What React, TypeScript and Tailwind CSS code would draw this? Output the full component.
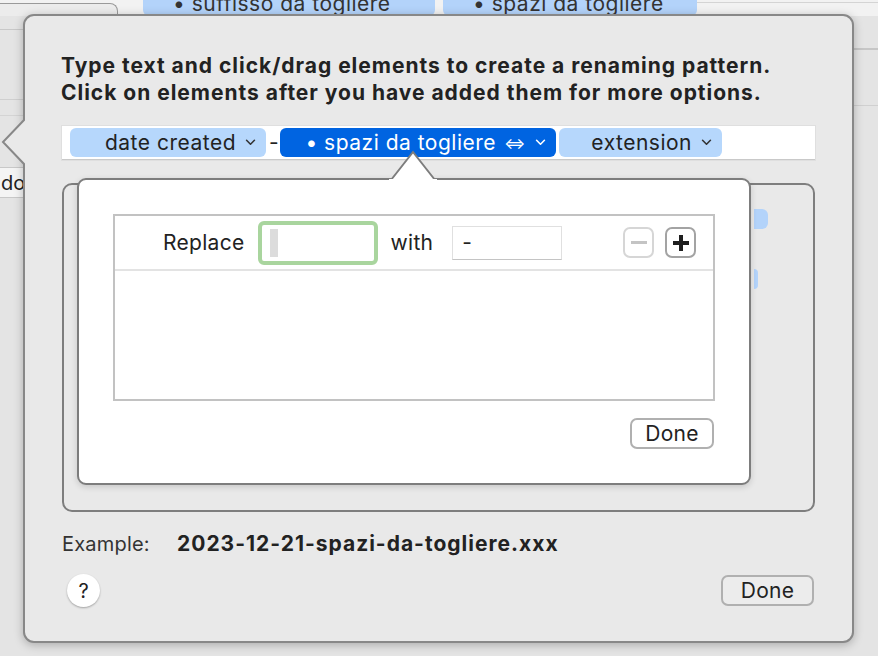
import React from 'react';

const font = { fontFamily: 'Inter, "Noto Sans", sans-serif' };

function Chevron({ className = '' }: { className?: string }) {
  return (
    <svg viewBox="0 0 12 8" className={`w-[11px] h-[7px] ${className}`} fill="none">
      <path d="M1.5 1.5 L6 6 L10.5 1.5" stroke="currentColor" strokeWidth="1.8" strokeLinecap="round" strokeLinejoin="round" />
    </svg>
  );
}

function Token({ label, selected = false, width }: { label: React.ReactNode; selected?: boolean; width: string }) {
  return (
    <div
      className={`${width} h-[29px] rounded-[6px] flex items-center justify-end pr-[10px] gap-[9px] text-[21px] tracking-[0.5px] ${
        selected ? 'bg-[#0064e1] text-white' : 'bg-[#b6d7fc] text-[#222]'
      }`}
    >
      {label}
      <Chevron className={selected ? 'text-white' : 'text-[#333]'} />
    </div>
  );
}

// the app window peeking out around the sheet
function BackgroundWindow() {
  return (
    <div className="w-full h-full bg-[#e4e4e4] flex flex-col">
      <div className="h-[16px] flex items-end bg-[#f2f2f2]">
        <div className="w-[118px] h-[13px] border-t border-r border-[#9a9a9a] rounded-tr-[8px] bg-[#ececec]" />
        <div className="ml-[25px] w-[292px] h-[16px] rounded-b-[6px] bg-[#b3d3fa] text-[21px] leading-[16px] tracking-[0.5px] text-[#333] pl-[30px] overflow-hidden">
          <span className="relative top-[-4px]">• suffisso da togliere</span>
        </div>
        <div className="ml-[8px] w-[254px] h-[16px] rounded-b-[6px] bg-[#b3d3fa] text-[21px] leading-[16px] tracking-[0.5px] text-[#333] pl-[30px] overflow-hidden">
          <span className="relative top-[-4px]">• spazi da togliere</span>
        </div>
        <div className="flex-1 h-[14px] border-t border-[#d4d4d4]" />
      </div>
      <div className="flex flex-1">
        <div className="w-[24px] flex flex-col">
          <div className="h-[14px] border-b border-[#c8c8c8]" />
          <div className="h-[70px] border-b border-[#cfcfcf]" />
          <div className="h-[16px] border-b border-[#d4d4d4]" />
          <div className="h-[52px] border-b border-[#c8c8c8]" />
          <div className="h-[30px] border-b border-[#c8c8c8] bg-[#f4f4f4] text-[20px] leading-[30px] text-[#222] pl-[1px] overflow-hidden">do</div>
          <div className="flex-1" />
        </div>
        <div className="flex-1" />
        <div className="w-[25px] flex flex-col">
          <div className="h-[34px] border-b-2 border-[#c6c6c6]" />
          <div className="h-[56px] border-b border-[#d0d0d0]" />
          <div className="flex-1" />
        </div>
      </div>
    </div>
  );
}

function ReplacePopover() {
  return (
    <div className="absolute left-[52px] top-[162px] w-[674px] h-[307px] bg-white border-2 border-[#7d7d7d] rounded-[9px] shadow-[0_2px_6px_rgba(0,0,0,0.15)] px-[34px] pt-[34px]">
      {/* arrow pointing at the selected token */}
      <svg className="absolute left-[310px] top-[-30px]" width="48" height="31" viewBox="0 0 48 31">
        <path d="M2 30 L24 2 L46 30 Z" fill="white" />
        <path d="M2 30 L24 2 L46 30" fill="none" stroke="#7d7d7d" strokeWidth="2" strokeLinejoin="miter" />
        <rect x="0" y="29" width="48" height="2" fill="white" />
      </svg>
      <div className="h-[187px] border-2 border-[#c2c2c2] flex flex-col">
        <div className="h-[55px] border-b-2 border-[#e3e3e3] flex items-center text-[21px] tracking-[0.3px] text-[#222]">
          <span className="ml-[48px]">Replace</span>
          <div className="ml-[13px] w-[120px] h-[44px] rounded-[6px] border-[4px] border-[#a9d59e] bg-white flex items-center pl-[8px]">
            <div className="w-[8px] h-[28px] bg-[#dcdcdc]" />
          </div>
          <span className="ml-[13px]">with</span>
          <div className="ml-[19px] w-[110px] h-[34px] border border-[#e0e0e0] border-b-[#c4c4c4] flex items-center pl-[9px]">-</div>
          <div className="ml-auto flex gap-[11px] mr-[17px]">
            <div className="w-[31px] h-[31px] rounded-[7px] border-2 border-[#d6d6d6] flex items-center justify-center">
              <div className="w-[16px] h-[3px] bg-[#c4c4c4]" />
            </div>
            <div className="w-[31px] h-[31px] rounded-[7px] border-2 border-[#a3a3a3] flex items-center justify-center relative">
              <div className="w-[16px] h-[4px] bg-[#1e1e1e]" />
              <div className="absolute w-[4px] h-[16px] bg-[#1e1e1e]" />
            </div>
          </div>
        </div>
        <div className="flex-1" />
      </div>
      <div className="flex justify-end mt-[17px] mr-[1px]">
        <button className="w-[84px] h-[31px] rounded-[7px] border-2 border-[#b0b0b0] bg-white text-[21px] tracking-[0.3px] leading-none text-[#222]">Done</button>
      </div>
    </div>
  );
}

export default function App() {
  return (
    <div className="relative w-[878px] h-[656px] overflow-hidden" style={font}>
      <BackgroundWindow />

      {/* Renaming sheet */}
      <div className="absolute left-[23px] top-[14px] w-[831px] h-[629px] bg-[#e9e9e9] border-2 border-[#888] rounded-[11px] shadow-[0_2px_10px_rgba(0,0,0,0.25)] px-[37px] pt-[36px]">
        {/* arrow on the left edge */}
        <svg className="absolute left-[-25px] top-[102px]" width="27" height="48" viewBox="0 0 27 48">
          <path d="M25 1 L3 24 L25 47 Z" fill="#e9e9e9" />
          <path d="M25 1 L3 24 L25 47" fill="none" stroke="#888" strokeWidth="2" />
          <rect x="25" y="0" width="2" height="48" fill="#e9e9e9" />
        </svg>

        <p className="text-[21px] leading-[27px] font-bold tracking-[0.98px] text-[#222] -ml-[1px]">
          Type text and click/drag elements to create a renaming pattern.
          <br />
          Click on elements after you have added them for more options.
        </p>

        <div className="mt-[20px] h-[34px] bg-white border-b border-[#c9c9c9] shadow-[0_0_0_1px_rgba(0,0,0,0.04)] flex items-center pl-[8px] gap-[3px]">
          <Token width="w-[196px]" label="date created" />
          <span className="text-[21px] text-[#222] w-[8px] text-center">-</span>
          <Token
            width="w-[276px]"
            selected
            label={
              <span className="flex items-center gap-[8px]">
                <span>• spazi da togliere</span>
                <span className="text-[16px]">⇔</span>
              </span>
            }
          />
          <Token width="w-[163px]" label="extension" />
        </div>

        <div className="mt-[23px] h-[329px] border-2 border-[#7e7e7e] rounded-[10px] flex justify-end pt-[24px] pr-[45px]">
          <div className="flex flex-col gap-[40px]">
            <div className="w-[14px] h-[20px] rounded-r-[6px] bg-[#b3d3fa]" />
            <div className="w-[4px] h-[20px] rounded-r-[4px] bg-[#b3d3fa]" />
          </div>
        </div>

        <div className="mt-[20px] flex items-center h-[24px]">
          <span className="text-[20px] tracking-[0.2px] text-[#333] w-[115px]">Example:</span>
          <span className="text-[21px] font-bold tracking-[1px] text-[#222]">2023-12-21-spazi-da-togliere.xxx</span>
        </div>

        <div className="mt-[18px] flex items-center justify-between">
          <div className="ml-[5px] w-[33px] h-[33px] rounded-full bg-white shadow-[0_1px_2px_rgba(0,0,0,0.3)] flex items-center justify-center text-[20px] text-[#222]">?</div>
          <button className="w-[93px] h-[31px] rounded-[7px] border-2 border-[#b0b0b0] bg-[#ececec] text-[21px] tracking-[0.3px] leading-none text-[#222] mr-[1px]">Done</button>
        </div>

        <ReplacePopover />
      </div>
    </div>
  );
}
